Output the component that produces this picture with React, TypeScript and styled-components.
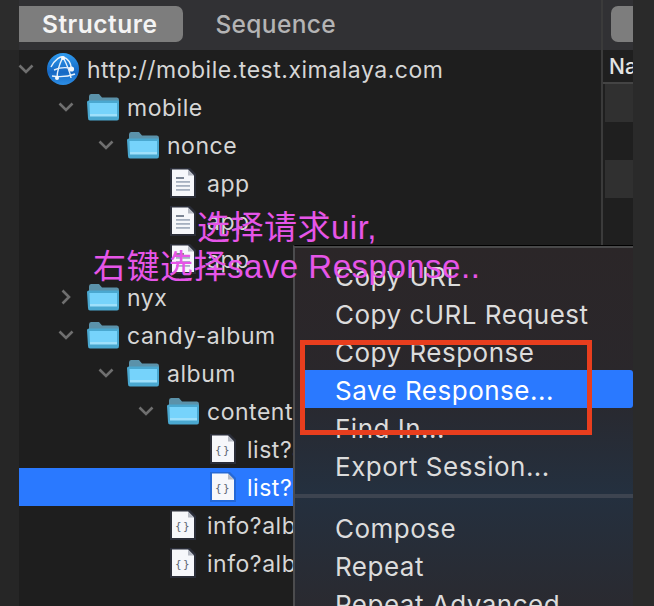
import React from 'react';
import styled, { createGlobalStyle } from 'styled-components';

const GlobalStyle = createGlobalStyle`
  html, body {
    margin: 0;
    padding: 0;
    background: #2a2a2a;
  }
  body {
    font-family: 'Inter', 'Liberation Sans', sans-serif;
    overflow: hidden;
  }
`;

const Page = styled.div`
  position: relative;
  width: 654px;
  height: 606px;
  overflow: hidden;
  display: grid;
  grid-template-columns: 19px 582px 2px 30px 21px;
  background: #2a2a2a;
`;

const LeftGutter = styled.div`
  background: linear-gradient(#2c2c2c 0 50px, #262626 50px);
`;

const RightGutter = styled.div`
  background: #2a2a2a;
`;

const Divider = styled.div`
  background: #3b3b3b;
`;

const TreePanel = styled.section`
  display: flex;
  flex-direction: column;
  background: #1e1e1e;
  min-width: 0;
`;

const TabBar = styled.div`
  height: 50px;
  flex: none;
  box-sizing: border-box;
  padding-top: 6px;
  display: flex;
  background: #313134;
`;

const Tab = styled.div<{ $active?: boolean }>`
  height: 36px;
  box-sizing: border-box;
  display: flex;
  align-items: center;
  font-size: 24.5px;
  letter-spacing: ${props => (props.$active ? '0.5px' : '0.35px')};
  font-weight: ${props => (props.$active ? 600 : 500)};
  color: ${props => (props.$active ? '#f4f4f4' : '#b4b4b5')};
  background: ${props => (props.$active ? '#7d7d7d' : 'transparent')};
  border-radius: 0 7px 7px 0;
  padding: ${props => (props.$active ? '0 26px 0 23px' : '0 0 0 32px')};
`;

const Row = styled.div<{ $depth: number; $selected?: boolean }>`
  height: 38px;
  flex: none;
  box-sizing: border-box;
  padding-left: ${props => props.$depth * 40}px;
  display: flex;
  align-items: center;
  background: ${props => (props.$selected ? '#2a79ff' : 'transparent')};
`;

const ChevronSlot = styled.div`
  width: 28px;
  flex: none;
  display: flex;
  justify-content: center;
  margin-left: -7px;
  margin-right: 7px;
`;

const IconSlot = styled.div`
  width: 32px;
  height: 32px;
  flex: none;
  display: flex;
  align-items: center;
  justify-content: center;
`;

const RowLabel = styled.span<{ $selected?: boolean }>`
  margin-left: 8px;
  padding-top: 2px;
  font-size: 23px;
  letter-spacing: 0.52px;
  white-space: nowrap;
  color: ${props => (props.$selected ? '#ffffff' : '#d6d6d6')};
`;

const SidePanel = styled.section`
  display: flex;
  flex-direction: column;
  background: #1f1f1f;
  min-width: 0;
  overflow: hidden;
`;

const SideTabBar = styled.div`
  height: 50px;
  flex: none;
  box-sizing: border-box;
  padding: 6px 0 0 8px;
  background: #313134;
`;

const SideTab = styled.div`
  height: 36px;
  background: #7d7d7d;
  border-radius: 7px 0 0 7px;
`;

const SideHeader = styled.div`
  height: 34px;
  flex: none;
  box-sizing: border-box;
  padding-left: 6px;
  display: flex;
  align-items: center;
  border-bottom: 2px solid #444444;
  font-size: 21px;
  font-weight: 500;
  color: #e4e4e4;
  white-space: nowrap;
`;

const Stripe = styled.div<{ $odd: boolean }>`
  height: 38px;
  flex: none;
  margin-left: 2px;
  background: ${props => (props.$odd ? '#303030' : '#1f1f1f')};
`;

const Menu = styled.div`
  position: absolute;
  left: 293px;
  top: 245px;
  width: 340px;
  height: 380px;
  box-sizing: border-box;
  padding-top: 10px;
  border-top: 1px solid #000000;
  border-left: 2px solid #4c4c4e;
  background: linear-gradient(#2b2628 0, #2a272b 35%, #24303f 65%, #2a2a30 95%);
  box-shadow: inset 0 2px 0 #49494a;
  display: flex;
  flex-direction: column;
`;

const MenuItem = styled.div<{ $highlighted?: boolean }>`
  height: 38px;
  flex: none;
  box-sizing: border-box;
  margin-left: ${props => (props.$highlighted ? '8px' : '0')};
  padding: 2px 0 0 ${props => (props.$highlighted ? '32px' : '40px')};
  display: flex;
  align-items: center;
  font-size: 26px;
  letter-spacing: 0.5px;
  white-space: nowrap;
  color: ${props => (props.$highlighted ? '#ffffff' : '#dcdcdc')};
  background: ${props => (props.$highlighted ? '#2a79ff' : 'transparent')};
  border-radius: ${props => (props.$highlighted ? '0 3px 3px 0' : '0')};
`;

const MenuSeparator = styled.div`
  height: 4px;
  flex: none;
  margin: 10px 0 10px;
  background: #3d4450;
`;

const RedFrame = styled.div`
  position: absolute;
  left: 300px;
  top: 340px;
  width: 292px;
  height: 95px;
  box-sizing: border-box;
  border: 5px solid #e83e1e;
`;

const Annotation = styled.div<{ $left: number; $top: number }>`
  position: absolute;
  left: ${props => props.$left}px;
  top: ${props => props.$top}px;
  font-family: 'Liberation Sans', 'Noto Sans CJK SC', sans-serif;
  font-size: 33px;
  letter-spacing: 0.5px;
  line-height: 40px;
  white-space: nowrap;
  color: #e655e8;
`;

const Chevron: React.FC<{ open: boolean }> = ({ open }) => (
  <svg width="18" height="18" viewBox="0 0 18 18" fill="none">
    <path
      d={open ? 'M2.5 5.5 L9 12 L15.5 5.5' : 'M5.5 2.5 L12 9 L5.5 15.5'}
      stroke="#6f6f6f"
      strokeWidth="2.6"
    />
  </svg>
);

const GlobeIcon = () => (
  <svg width="32" height="32" viewBox="0 0 32 32" fill="none">
    <defs>
      <linearGradient id="globe" x1="0" y1="0" x2="0" y2="1">
        <stop offset="0" stopColor="#2f9cf0" />
        <stop offset="0.6" stopColor="#1668c4" />
        <stop offset="1" stopColor="#2d8fe6" />
      </linearGradient>
    </defs>
    <circle cx="16" cy="16" r="16" fill="url(#globe)" />
    <g stroke="#e8f2fb" strokeWidth="1.4">
      <path d="M4 14 C8 6 14 3 16 4 C22 6 24 10 24.5 16" />
      <path d="M16 4 C13 10 10 18 10 25" />
      <path d="M16 4 C19 10 23 18 24 25" />
      <path d="M7 17 C14 14 20 14 26 16" />
      <path d="M5 23 C12 24 20 24 28 21" />
    </g>
    <circle cx="16" cy="5" r="2" fill="#f4f8fc" />
    <circle cx="24.5" cy="16" r="2.6" fill="#f4f8fc" />
    <circle cx="10" cy="25" r="2" fill="#f4f8fc" />
  </svg>
);

const FolderIcon = () => (
  <svg width="32" height="28" viewBox="0 0 32 28" fill="none">
    <path d="M2 3.5 Q2 1 4 1 H12 L15 4.5 H30 Q32 4.5 32 7 V14 H2 Z" fill="#5b92aa" />
    <path d="M0 9 Q0 7.5 2 7.5 H30 Q32 7.5 32 9 V25 Q32 27.5 30 27.5 H3 Q1 27.5 1 25 Z" fill="#4aa8d0" />
    <path d="M2.5 10 H30 V23 H3 Z" fill="#76d3fb" />
    <rect x="3" y="21" width="27" height="2.5" fill="#9ee0fb" />
  </svg>
);

const FileIcon: React.FC<{ kind: 'text' | 'json'; selected?: boolean }> = ({ kind, selected }) => (
  <svg width="26" height="30" viewBox="0 0 26 30" fill="none">
    <path d="M0 0 H20 L26 6 V30 H0 Z" fill={selected ? '#2568d6' : '#2a2d38'} />
    <path d="M2 1.5 H18 L24 7.5 V28 H2 Z" fill="#f6f7fb" />
    <path d="M18 1.5 L24 7.5 H18 Z" fill="#b6bac4" />
    {kind === 'text' ? (
      <g>
        <rect x="6" y="9" width="8" height="2" fill="#7b8494" />
        <rect x="6" y="13" width="14" height="1.8" fill="#a6b0c0" />
        <rect x="6" y="17" width="14" height="1.8" fill="#a6b0c0" />
        <rect x="6" y="21" width="14" height="1.8" fill="#a6b0c0" />
      </g>
    ) : (
      <text x="13" y="20" textAnchor="middle" fontFamily="'DejaVu Sans Mono', monospace" fontSize="11" letterSpacing="1.5" fill="#5d6675">
        {'{}'}
      </text>
    )}
  </svg>
);

type TreeNode = {
  label: string;
  depth: number;
  icon: 'globe' | 'folder' | 'text' | 'json';
  open?: boolean;
  selected?: boolean;
};

const nodes: TreeNode[] = [
  { label: 'http://mobile.test.ximalaya.com', depth: 0, icon: 'globe', open: true },
  { label: 'mobile', depth: 1, icon: 'folder', open: true },
  { label: 'nonce', depth: 2, icon: 'folder', open: true },
  { label: 'app', depth: 3, icon: 'text' },
  { label: 'app', depth: 3, icon: 'text' },
  { label: 'app', depth: 3, icon: 'text' },
  { label: 'nyx', depth: 1, icon: 'folder', open: false },
  { label: 'candy-album', depth: 1, icon: 'folder', open: true },
  { label: 'album', depth: 2, icon: 'folder', open: true },
  { label: 'contents', depth: 3, icon: 'folder', open: true },
  { label: 'list?albumId', depth: 4, icon: 'json' },
  { label: 'list?albumId', depth: 4, icon: 'json', selected: true },
  { label: 'info?albumId', depth: 3, icon: 'json' },
  { label: 'info?albumId', depth: 3, icon: 'json' },
];

const renderIcon = (node: TreeNode) => {
  if (node.icon === 'globe') return <GlobeIcon />;
  if (node.icon === 'folder') return <FolderIcon />;
  return <FileIcon kind={node.icon} selected={node.selected} />;
};

const topItems = ['Copy URL', 'Copy cURL Request', 'Copy Response', 'Save Response...', 'Find In...', 'Export Session...'];
const bottomItems = ['Compose', 'Repeat', 'Repeat Advanced'];

export default function App() {
  return (
    <Page>
      <GlobalStyle />
      <LeftGutter />
      <TreePanel>
        <TabBar>
          <Tab $active>Structure</Tab>
          <Tab>Sequence</Tab>
        </TabBar>
        {nodes.map((node, i) => (
          <Row key={i} $depth={node.depth} $selected={node.selected}>
            <ChevronSlot>{node.open !== undefined && <Chevron open={node.open} />}</ChevronSlot>
            <IconSlot>{renderIcon(node)}</IconSlot>
            <RowLabel $selected={node.selected}>{node.label}</RowLabel>
          </Row>
        ))}
      </TreePanel>
      <Divider />
      <SidePanel>
        <SideTabBar>
          <SideTab />
        </SideTabBar>
        <SideHeader>Name</SideHeader>
        {Array.from({ length: 4 }, (_, i) => (
          <Stripe key={i} $odd={i % 2 === 0} />
        ))}
      </SidePanel>
      <RightGutter />

      <Menu>
        {topItems.map(item => (
          <MenuItem key={item} $highlighted={item === 'Save Response...'}>
            {item}
          </MenuItem>
        ))}
        <MenuSeparator />
        {bottomItems.map(item => (
          <MenuItem key={item}>{item}</MenuItem>
        ))}
      </Menu>
      <RedFrame />
      <Annotation $left={197} $top={208}>选择请求uir,</Annotation>
      <Annotation $left={93} $top={247}>右键选择save Response..</Annotation>
    </Page>
  );
}
